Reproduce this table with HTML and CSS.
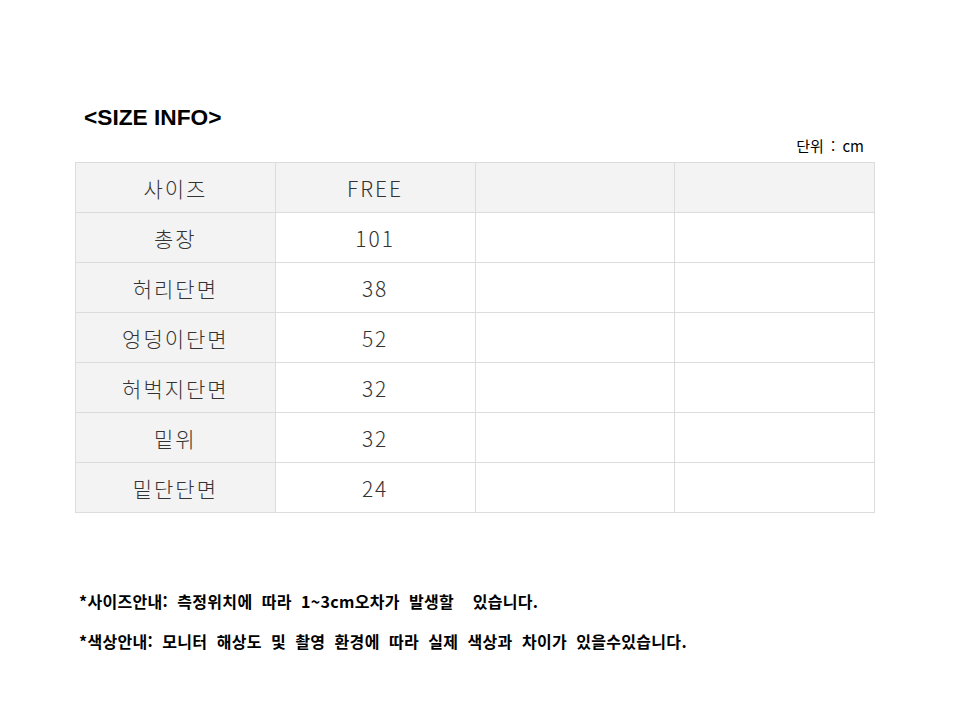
FILE: index.html
```html
<!DOCTYPE html>
<html lang="ko">
<head>
<meta charset="utf-8">
<link rel="stylesheet" href="styles.css">
</head>
<body>
<div class="wrap">
  <h1 class="title">&lt;SIZE INFO&gt;</h1>
  <div class="unit">단위 : cm</div>
  <table class="size">
    <tr class="head"><td class="lab">사이즈</td><td>FREE</td><td></td><td></td></tr>
    <tr><td class="lab">총장</td><td>101</td><td></td><td></td></tr>
    <tr><td class="lab">허리단면</td><td>38</td><td></td><td></td></tr>
    <tr><td class="lab">엉덩이단면</td><td>52</td><td></td><td></td></tr>
    <tr><td class="lab">허벅지단면</td><td>32</td><td></td><td></td></tr>
    <tr><td class="lab">밑위</td><td>32</td><td></td><td></td></tr>
    <tr><td class="lab">밑단단면</td><td>24</td><td></td><td></td></tr>
  </table>
  <div class="notes">
    <p>*사이즈안내: 측정위치에 따라 1~3cm오차가 발생할&nbsp; 있습니다.</p>
    <p>*색상안내: 모니터 해상도 및 촬영 환경에 따라 실제 색상과 차이가 있을수있습니다.</p>
  </div>
</div>
</body>
</html>
```
FILE: styles.css
```css
html, body {
  margin: 0;
  padding: 0;
  background: #ffffff;
}
.wrap {
  width: 800px;
  padding: 102px 0 0 75px;
}
.title {
  margin: 0 0 0 9px;
  font-family: "Liberation Sans", "Noto Sans CJK KR", sans-serif;
  font-weight: 700;
  font-size: 22.7px;
  line-height: 30px;
  color: #000;
}
.unit {
  text-align: right;
  padding-right: 11px;
  margin-top: 4px;
  font-family: "Noto Sans CJK KR", sans-serif;
  font-size: 15px;
  line-height: 20px;
  height: 26px;
  word-spacing: 3px;
  color: #000;
}
.size {
  border-collapse: collapse;
  width: 800px;
  table-layout: fixed;
  font-family: "Noto Sans CJK KR", sans-serif;
  font-weight: 300;
  font-size: 21px;
  letter-spacing: 2px;
  color: #333;
}
.size td {
  border: 1px solid #dcdcdc;
  height: 49px;
  padding: 0;
  text-align: center;
  vertical-align: middle;
}
.size td.lab,
.size tr.head td {
  background: #f3f3f3;
}
.notes {
  margin-top: 77px;
  padding-left: 4px;
  font-family: "Noto Sans CJK KR", sans-serif;
  font-weight: 700;
  font-size: 16px;
  letter-spacing: 0.3px;
  word-spacing: 4.5px;
  color: #000;
}
.notes p {
  margin: 0 0 18px 0;
  line-height: 22px;
}
```
